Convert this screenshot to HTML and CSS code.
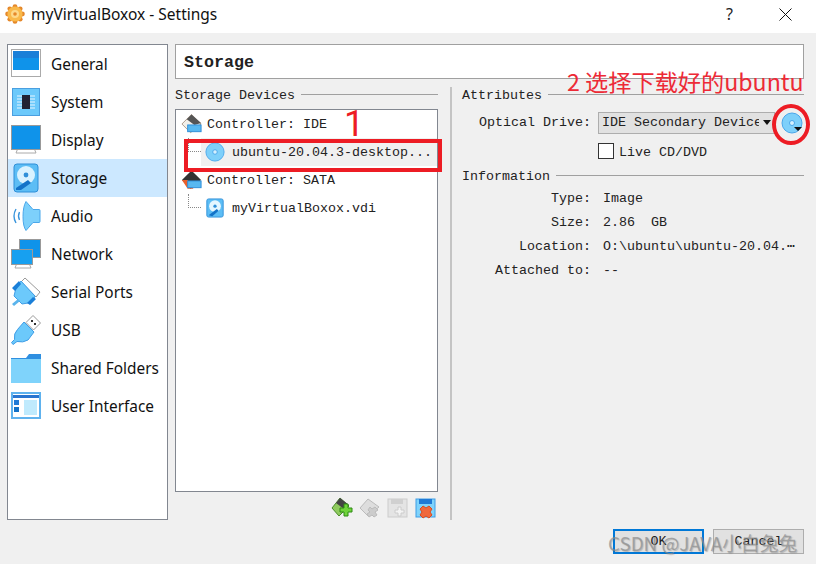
FILE: index.html
```html
<!DOCTYPE html>
<html lang="en">
<head>
<meta charset="utf-8">
<title>myVirtualBoxox - Settings</title>
<link rel="stylesheet" href="styles.css">
</head>
<body>
<div class="window">
  <header class="titlebar">
    <svg class="app-icon" width="20" height="20" viewBox="0 0 20 20"><g fill="#e5882a"><circle cx="10" cy="2.6" r="2.4"/><circle cx="10" cy="17.4" r="2.4"/><circle cx="2.6" cy="10" r="2.4"/><circle cx="17.4" cy="10" r="2.4"/><circle cx="4.8" cy="4.8" r="2.4"/><circle cx="15.2" cy="4.8" r="2.4"/><circle cx="4.8" cy="15.2" r="2.4"/><circle cx="15.2" cy="15.2" r="2.4"/></g><circle cx="10" cy="10" r="7.6" fill="#f9b94a"/><circle cx="10" cy="10" r="4" fill="#fdd98a"/><circle cx="10" cy="10" r="1.8" fill="#e5882a"/></svg>
    <span class="title">myVirtualBoxox - Settings</span>
    <span class="help">?</span>
    <svg class="close" width="13" height="13" viewBox="0 0 13 13"><path d="M.5.5l12 12M12.5.5l-12 12" stroke="#111" fill="none"/></svg>
  </header>
  <div class="content">
    <nav class="nav">
      <div class="nav-item"><svg class="nav-icon" viewBox="0 0 30 30"><rect x=".5" y=".5" width="29" height="27" fill="#fff" stroke="#aaa"/><rect x="2" y="2" width="26" height="19" fill="#0f93ea"/><rect x="2" y="2" width="26" height="7" fill="#1a7fd8"/></svg><span>General</span></div>
      <div class="nav-item"><svg class="nav-icon" viewBox="0 0 30 30"><rect x="1.5" y="1.5" width="27" height="27" fill="#6cc9fb" stroke="#4a9fe0"/><path d="M6 9h18M6 12h18M6 15h18M6 18h18M6 21h18" stroke="#e8f6ff"/><rect x="11" y="8" width="8" height="14" fill="#223"/></svg><span>System</span></div>
      <div class="nav-item"><svg class="nav-icon" viewBox="0 0 30 30"><path d="M7 23h16l2 5H5z" fill="#fff" stroke="#aaa"/><rect x=".5" y=".5" width="29" height="24" fill="#0f93ea" stroke="#999"/></svg><span>Display</span></div>
      <div class="nav-item selected"><svg class="nav-icon" viewBox="0 0 30 30"><rect x="3" y="1" width="24" height="28" rx="3" fill="#5cbdf5" stroke="#2f8fd8"/><circle cx="15" cy="12" r="9" fill="#d9f2ff"/><circle cx="15" cy="12" r="2.4" fill="#2f8fd8"/><path d="M5 25l12-8 3 3-10 7H5z" fill="#1272c8"/></svg><span>Storage</span></div>
      <div class="nav-item"><svg class="nav-icon" viewBox="0 0 30 30"><path d="M15 .5l7 8h6q1 0 1 1v11q0 1-1 1h-6l-7 8q-3-4-3-14t3-15z" fill="#7dd0fb" stroke="#4aa7ea"/><path d="M5 8q-4 7 0 14M8.5 11q-2 4 0 8" stroke="#3a95dc" stroke-width="1.4" fill="none"/></svg><span>Audio</span></div>
      <div class="nav-item"><svg class="nav-icon" viewBox="0 0 30 30"><rect x="8.5" y=".5" width="21" height="18" fill="#0f93ea" stroke="#999"/><path d="M6 24h12l2 5H4z" fill="#fff" stroke="#aaa"/><rect x=".5" y="10.5" width="21" height="15" fill="#17a0f0" stroke="#999"/></svg><span>Network</span></div>
      <div class="nav-item"><svg class="nav-icon" viewBox="0 0 30 30"><path d="M14 1l15 14-4 5L10 5z" fill="#fff" stroke="#999"/><path d="M10 4l14 15-2 5-5 2-6 1-8-8 2-8z" fill="#6cc9fb" stroke="#3f9de6"/><path d="M1 11l7-7 2 3-6 7zM16 26l6-6 3 2-6 6z" fill="#1a7fd8"/><path d="M1 27l6-5 2 2-6 5z" fill="#5ab4ec"/></svg><span>Serial Ports</span></div>
      <div class="nav-item"><svg class="nav-icon" viewBox="0 0 30 30"><path d="M22 .5l7.5 7.5-7 7L15 7.500z" fill="#fff" stroke="#999"/><rect x="20" y="5" width="2" height="2" fill="#333"/><rect x="23" y="8" width="2" height="2" fill="#333"/><path d="M13 7l10 10-6 8q-5 3-11 1.500l-4 3-1.500-2 3-3q-1-6 3-10z" fill="#6cc9fb" stroke="#3f9de6"/></svg><span>USB</span></div>
      <div class="nav-item"><svg class="nav-icon" viewBox="0 0 30 30"><path d="M0 5h15l3-4h12v28H0z" fill="#2f8fe0"/><rect x="0" y="6" width="30" height="24" fill="#7fd3fb"/></svg><span>Shared Folders</span></div>
      <div class="nav-item"><svg class="nav-icon" viewBox="0 0 30 30"><rect x="1" y="2" width="28" height="25" fill="#fff" stroke="#5fb2ee" stroke-width="2"/><rect x="2" y="4" width="26" height="3" fill="#2a75d0"/><rect x="3" y="9" width="5" height="5" fill="#1f7ad6"/><rect x="3" y="16" width="5" height="5" fill="#1272c8"/><rect x="13" y="9" width="13" height="15" fill="#bfeafd"/></svg><span>User Interface</span></div>
    </nav>
    <main class="main">
      <div class="page-header">Storage</div>
      <div class="panes">
        <section class="devices">
          <div class="group-title"><span>Storage Devices</span></div>
          <div class="tree">
            <div class="tree-row">
              <svg class="ctrl-icon" viewBox="0 0 24 22"><path d="M12 1L2 11l9 9 11-9z" fill="#f2efe9" stroke="#a98"/><path d="M12 1l-5 5 8 6 7-2z" fill="#555"/><rect x="8" y="12" width="14" height="7" fill="#58b8f0" stroke="#2f8fd8"/></svg>
              <span>Controller: IDE</span>
            </div>
            <div class="tree-row child">
              <span class="branch"></span>
              <span class="row-fill"><svg class="dev-icon" viewBox="0 0 22 22"><circle cx="11" cy="11" r="10" fill="#7ed0fa" stroke="#4aa7ea"/><circle cx="11" cy="11" r="2.500" fill="#d5f0fe" stroke="#4aa7ea"/></svg><span>ubuntu-20.04.3-desktop...</span></span>
            </div>
            <div class="tree-row">
              <svg class="ctrl-icon" viewBox="0 0 24 22"><path d="M12 1L2 11l9 9 11-9z" fill="#333"/><path d="M2 11l6 9h6l-6-9z" fill="#e8602c"/><rect x="8" y="12" width="14" height="7" fill="#58b8f0" stroke="#2f8fd8"/></svg>
              <span>Controller: SATA</span>
            </div>
            <div class="tree-row child">
              <span class="branch"></span>
              <span class="row-fill plain"><svg class="dev-icon" viewBox="0 0 22 22"><rect x="2" y="1" width="18" height="20" rx="2" fill="#5cbdf5" stroke="#2f8fd8"/><circle cx="11" cy="9" r="6.500" fill="#e4f6ff"/><circle cx="11" cy="9" r="1.800" fill="#2f8fd8"/><path d="M4 19l9-7 2 2-7 6z" fill="#1272c8"/></svg><span>myVirtualBoxox.vdi</span></span>
            </div>
          </div>
          <div class="tree-tools">
            <svg class="tool" viewBox="0 0 22 22"><path d="M9 1L1 11l7 8 10-10z" fill="#8fcb5e" stroke="#4b8a2c"/><path d="M9 1L5 6l8 6 5-4z" fill="#444"/><path d="M13 7h4v4h4v4h-4v4h-4v-4H9v-4h4z" fill="#6fd33a" stroke="#2f8a14"/></svg>
            <svg class="tool" viewBox="0 0 22 22"><path d="M9 2L1 11l8 8 11-9z" fill="#ddd" stroke="#bbb"/><path d="M11 10l2 2 3-2 3 3-3 2 2 3-3 2-2-2-3 2-2-3 3-2-2-2z" fill="#ccc" stroke="#bbb"/></svg>
            <svg class="tool" viewBox="0 0 22 22"><rect x="1" y="2" width="19" height="18" fill="#e4e4e4" stroke="#ccc"/><rect x="4" y="2" width="12" height="5" fill="#d0d0d0"/><path d="M11 10h3v3h3v3h-3v3h-3v-3H8v-3h3z" fill="#f3f3f3" stroke="#ccc"/></svg>
            <svg class="tool" viewBox="0 0 22 22"><rect x="1" y="2" width="19" height="18" fill="#7fd3fb" stroke="#3f9de6"/><rect x="4" y="2" width="13" height="5" fill="#1f7ad6"/><path d="M8 9l3 2 3-2 3 3-2 3 2 3-3 3-3-2-3 2-3-3 2-3-2-3z" fill="#f0683c" stroke="#d84c20"/></svg>
          </div>
        </section>
        <div class="divider"></div>
        <section class="details">
          <div class="group-title"><span>Attributes</span></div>
          <div class="attr-grid">
            <label class="field-label">Optical Drive:</label>
            <div class="drive-row">
              <div class="combo"><span class="combo-text">IDE Secondary Device</span><span class="combo-arrow"></span></div>
              <span class="disc-btn"><svg width="22" height="22" viewBox="0 0 22 22"><circle cx="11" cy="11" r="10" fill="#7ed0fa" stroke="#4aa7ea"/><circle cx="11" cy="11" r="2.500" fill="#d5f0fe" stroke="#4aa7ea"/><path d="M13 15h8l-4 4z" fill="#111"/></svg></span>
            </div>
            <span></span>
            <div class="check-row"><span class="checkbox"></span><span class="check-label">Live CD/DVD</span></div>
          </div>
          <div class="group-title info-title"><span>Information</span></div>
          <div class="info-grid">
            <span class="info-label">Type:</span><span>Image</span>
            <span class="info-label">Size:</span><span>2.86 &nbsp;GB</span>
            <span class="info-label">Location:</span><span>O:\ubuntu\ubuntu-20.04.⋯</span>
            <span class="info-label">Attached to:</span><span>--</span>
          </div>
        </section>
      </div>
    </main>
  </div>
  <footer class="buttons">
    <button class="btn default">OK</button>
    <button class="btn">Cancel</button>
  </footer>
  <div class="mark-rect"></div>
  <div class="mark-circle"></div>
  <div class="mark-one">1</div>
  <div class="mark-two">2 选择下载好的ubuntu</div>
  <div class="watermark">CSDN @JAVA小白兔兔</div>
</div>
</body>
</html>
```

FILE: styles.css
```css
* { box-sizing: border-box; }
html, body { margin: 0; padding: 0; }
body { width: 816px; height: 564px; overflow: hidden; background: #f0f0f0; }
.window {
  position: relative;
  width: 816px;
  height: 564px;
  display: flex;
  flex-direction: column;
  background: #f0f0f0;
  color: #222;
  font-family: "Liberation Mono", monospace;
  font-size: 13.33px;
}
.titlebar {
  height: 33px;
  flex: none;
  display: flex;
  align-items: center;
  background: #fff;
  padding: 0 4px 5px 5px;
  font-family: "Noto Sans", sans-serif;
  font-size: 15.5px;
}
.app-icon { margin-right: 6px; }
.title { flex: 1; color: #111; }
.help { width: 16px; margin-right: 37px; font-size: 16px; color: #222; }
.close { margin-right: 20px; }
.content {
  height: 487px;
  flex: none;
  display: flex;
  gap: 7px;
  padding: 11px 12px 0 7px;
}
.nav {
  width: 161px;
  height: 476px;
  flex: none;
  background: #fff;
  border: 1px solid #828790;
  font-family: "Noto Sans", sans-serif;
  font-size: 15.4px;
  color: #111;
}
.nav-item {
  height: 38px;
  display: flex;
  align-items: center;
  gap: 10px;
  padding-left: 3px;
}
.nav-item.selected { background: #cce8ff; }
.nav-icon { width: 30px; height: 30px; flex: none; }
.main { flex: 1; display: flex; flex-direction: column; min-width: 0; }
.page-header {
  height: 35px;
  flex: none;
  background: #fff;
  border: 1px solid #a0a0a0;
  padding: 0 8px;
  line-height: 35px;
  font-weight: bold;
  font-size: 16.67px;
  color: #222;
}
.panes { flex: 1; display: flex; min-height: 0; padding-top: 8px; }
.devices { width: 263px; flex: none; display: flex; flex-direction: column; }
.group-title {
  height: 16px;
  display: flex;
  align-items: center;
  gap: 6px;
  white-space: nowrap;
}
.group-title::after { content: ""; flex: 1; height: 1px; background: #a0a0a0; margin-top: -2px; }
.tree {
  height: 383px;
  flex: none;
  margin-top: 6px;
  background: #fff;
  border: 1px solid #828790;
  overflow: hidden;
}
.tree-row { height: 28px; display: flex; align-items: center; gap: 4px; padding-left: 4px; white-space: nowrap; }
.tree-row.child { padding-left: 12px; gap: 0; }
.ctrl-icon { width: 23px; height: 22px; flex: none; }
.dev-icon { width: 20px; height: 20px; flex: none; }
.branch { width: 13px; height: 14px; flex: none; border-left: 1px dotted #888; border-bottom: 1px dotted #888; margin-top: -14px; }
.row-fill { flex: 1; height: 28px; display: flex; align-items: center; gap: 7px; padding-left: 4px; background: #f0f0f0; }
.row-fill.plain { background: transparent; }
.tree-tools { display: flex; justify-content: flex-end; gap: 6px; padding: 5px 1px 0 0; }
.tool { width: 22px; height: 22px; }
.divider { width: 2px; flex: none; margin: 0 10px 0 12px; background: #c4c4c4; height: 433px; }
.details { flex: 1; min-width: 0; }
.attr-grid { display: grid; grid-template-columns: 129px 1fr; column-gap: 7px; margin-top: 8px; align-items: center; }
.field-label { text-align: right; }
.drive-row { display: flex; align-items: center; gap: 6px; height: 23px; }
.combo {
  width: 177px;
  height: 22px;
  flex: none;
  display: flex;
  align-items: center;
  background: #e1e1e1;
  border: 1px solid #adadad;
  padding: 0 3px;
  overflow: hidden;
}
.combo-text { width: 157px; flex: none; overflow: hidden; white-space: nowrap; }
.combo-arrow { width: 0; height: 0; margin-left: 4px; border: 4px solid transparent; border-top: 5px solid #111; border-bottom: 0; }
.disc-btn { display: flex; width: 22px; height: 22px; }
.check-row { display: flex; align-items: center; gap: 5px; margin-top: 8px; height: 17px; }
.checkbox { width: 16px; height: 16px; background: #fff; border: 1px solid #333; }
.check-label { margin-top: 3px; }
.info-title { margin-top: 9px; }
.info-grid {
  display: grid;
  grid-template-columns: 129px 1fr;
  column-gap: 12px;
  grid-auto-rows: 24px;
  align-items: center;
  margin-top: 2px;
  white-space: nowrap;
}
.info-label { text-align: right; }
.buttons {
  flex: 1;
  display: flex;
  justify-content: flex-end;
  gap: 9px;
  padding: 9px 12px 0 0;
}
.btn {
  width: 91px;
  height: 25px;
  font: inherit;
  color: #222;
  background: #e1e1e1;
  border: 1px solid #adadad;
  padding: 0;
}
.btn.default { border: 2px solid #0078d7; }
.mark-rect { position: absolute; left: 184px; top: 139px; width: 258px; height: 33px; border: 4px solid #ed1c24; }
.mark-circle { position: absolute; left: 772px; top: 104px; width: 38px; height: 41px; border: 4px solid #ed1c24; border-radius: 50%; }
.mark-one { position: absolute; left: 344px; top: 103px; font: 36px/42px Roboto, sans-serif; color: #ed1c24; }
.mark-two { position: absolute; left: 567px; top: 65px; font: 23.2px/32px "Noto Sans CJK SC", sans-serif; color: #ed2a36; white-space: nowrap; }
.watermark {
  position: absolute;
  left: 608px;
  top: 529px;
  font: 18.8px/28px "Noto Sans CJK SC", sans-serif;
  color: rgba(140,140,140,.7);
  text-shadow: 1px 1px 1px rgba(100,100,100,.35);
  white-space: nowrap;
}
```
